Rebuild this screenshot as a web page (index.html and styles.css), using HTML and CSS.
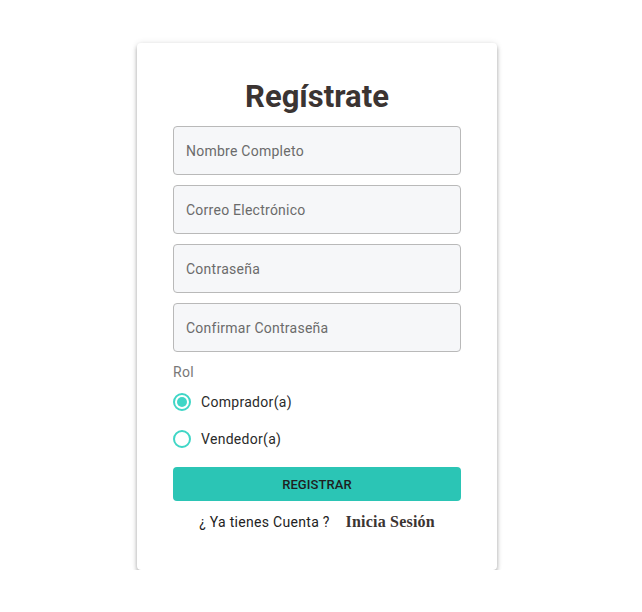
FILE: index.html
```html
<!DOCTYPE html>
<html lang="es">
<head>
<meta charset="utf-8">
<title>Regístrate</title>
<link rel="stylesheet" href="styles.css">
</head>
<body>
<div class="page">
  <form class="card">
    <h1 class="title">Regístrate</h1>
    <div class="fields">
      <input class="field" type="text" placeholder="Nombre Completo">
      <input class="field" type="email" placeholder="Correo Electrónico">
      <input class="field" type="password" placeholder="Contraseña">
      <input class="field" type="password" placeholder="Confirmar Contraseña">
    </div>
    <div class="role-label">Rol</div>
    <div class="radios">
      <label class="radio-row"><span class="radio checked"></span><span class="radio-text">Comprador(a)</span></label>
      <label class="radio-row"><span class="radio"></span><span class="radio-text">Vendedor(a)</span></label>
    </div>
    <button class="submit" type="button">REGISTRAR</button>
    <p class="footer">¿ Ya tienes Cuenta ? <a class="login-link">Inicia Sesión</a></p>
  </form>
</div>
</body>
</html>
```
FILE: styles.css
```css
html, body {
  margin: 0;
  padding: 0;
  background: #ffffff;
}
body {
  font-family: Roboto, "Liberation Sans", sans-serif;
}
.page {
  padding: 43px 0 0 137px;
}
.card {
  box-sizing: border-box;
  width: 360px;
  height: 527px;
  background: #fff;
  border-radius: 4px;
  box-shadow: 0 3px 4px rgba(0,0,0,0.3), 0 0 6px rgba(0,0,0,0.1);
  padding: 35px 36px 0;
  display: flex;
  flex-direction: column;
}
.title {
  margin: 0;
  text-align: center;
  font-size: 31px;
  line-height: 37px;
  font-weight: 700;
  color: #3b3432;
}
.fields {
  margin-top: 11px;
  display: flex;
  flex-direction: column;
  gap: 10px;
}
.field {
  box-sizing: border-box;
  width: 288px;
  height: 49px;
  margin: 0;
  border: 1px solid #b9b9b9;
  border-radius: 4px;
  background: #f6f7f9;
  padding: 0 12px;
  font-family: Roboto, "Liberation Sans", sans-serif;
  font-size: 14px;
  letter-spacing: 0.25px;
  color: #333;
  outline: none;
}
.field::placeholder {
  color: #6b6b6b;
  opacity: 1;
}
.role-label {
  margin-top: 12px;
  font-size: 14px;
  line-height: 16px;
  letter-spacing: 0.3px;
  color: #787878;
}
.radios {
  margin-top: 13px;
  display: flex;
  flex-direction: column;
  gap: 19px;
}
.radio-row {
  display: flex;
  align-items: center;
  gap: 10px;
  height: 18px;
  font-size: 14px;
  line-height: 18px;
  letter-spacing: 0.3px;
  color: #2a2a2a;
}
.radio {
  box-sizing: border-box;
  width: 18px;
  height: 18px;
  border: 2px solid #3fd6c6;
  border-radius: 50%;
  display: flex;
  align-items: center;
  justify-content: center;
}
.radio.checked::after {
  content: "";
  width: 10px;
  height: 10px;
  border-radius: 50%;
  background: #3fd6c6;
}
.submit {
  margin-top: 19px;
  width: 288px;
  height: 34px;
  border: none;
  border-radius: 4px;
  background: #2bc5b5;
  color: #1f1f1f;
  font-family: Roboto, "Liberation Sans", sans-serif;
  font-size: 13px;
  font-weight: 500;
  letter-spacing: 0.1px;
  padding: 0;
}
.footer {
  margin: 12px 0 0;
  text-align: center;
  font-size: 14px;
  line-height: 18px;
  letter-spacing: 0.3px;
  color: #222;
}
.login-link {
  margin-left: 12px;
  font-family: "Liberation Serif", serif;
  font-weight: 700;
  font-size: 16px;
  letter-spacing: 0.2px;
  color: #3b3432;
}
```
